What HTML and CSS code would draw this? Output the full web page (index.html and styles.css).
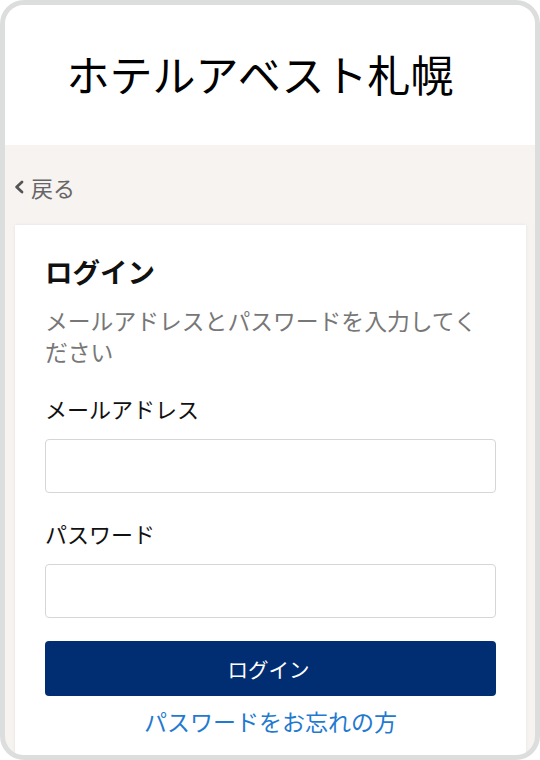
FILE: index.html
```html
<!DOCTYPE html>
<html lang="ja">
<head>
<meta charset="utf-8">
<title>ログイン</title>
<link rel="stylesheet" href="styles.css">
</head>
<body>
<div class="frame">
  <header class="header">
    <h1 class="title">ホテルアベスト札幌</h1>
  </header>
  <main class="main">
    <a class="back" href="#">
      <svg class="chev" width="12" height="14" viewBox="0 0 12 14"><path d="M9 2 L3.6 7 L9 12" fill="none" stroke="#555" stroke-width="2.8" stroke-linecap="round" stroke-linejoin="round"/></svg>
      <span>戻る</span>
    </a>
    <section class="card">
      <h2 class="card-title">ログイン</h2>
      <p class="lead">メールアドレスとパスワードを入力してください</p>
      <label class="label" for="email">メールアドレス</label>
      <input class="input" id="email" type="email">
      <label class="label label-pw" for="pw">パスワード</label>
      <input class="input" id="pw" type="password">
      <button class="btn" type="button">ログイン</button>
      <a class="forgot" href="#">パスワードをお忘れの方</a>
    </section>
  </main>
</div>
</body>
</html>
```

FILE: styles.css
```css
* { box-sizing: border-box; }
html, body { margin: 0; padding: 0; }
body {
  font-family: "Noto Sans CJK JP", "Noto Sans", sans-serif;
  background: #ffffff;
  color: #111;
}
.frame {
  width: 540px;
  height: 760px;
  border: 5px solid #dcdedd;
  border-radius: 24px;
  overflow: hidden;
  background: #f6f3f1;
  display: flex;
  flex-direction: column;
}
.header {
  height: 140px;
  background: #fff;
  display: flex;
  align-items: center;
  justify-content: center;
  padding-right: 20px;
  padding-bottom: 4px;
  flex-shrink: 0;
}
.title {
  margin: 0;
  font-size: 43px;
  font-weight: 400;
  color: #000;
  line-height: 1;
}
.main {
  flex: 1;
  display: flex;
  flex-direction: column;
}
.back {
  height: 80px;
  display: flex;
  align-items: center;
  padding-left: 8px;
  padding-top: 3px;
  color: #666;
  text-decoration: none;
  font-size: 22px;
  gap: 6px;
}
.chev { display: block; }
.card {
  flex: 1;
  margin: 0 9px 0 10px;
  background: #fff;
  padding: 27px 30px 0 30px;
  box-shadow: 0 0 3px rgba(0,0,0,0.08);
  display: flex;
  flex-direction: column;
}
.card-title {
  margin: 0;
  font-size: 27.5px;
  font-weight: 700;
  line-height: 38px;
  color: #111;
}
.lead {
  margin: 15px 0 0 0;
  font-size: 22.8px;
  line-height: 31px;
  color: #777;
}
.label {
  display: block;
  margin-top: 26px;
  font-size: 22px;
  line-height: 30px;
  color: #111;
}
.label-pw { margin-top: 25px; }
.input {
  display: block;
  width: 100%;
  height: 54px;
  margin-top: 16px;
  border: 1px solid #d6d6d6;
  border-radius: 4px;
  background: #fff;
  font-size: 20px;
}
.btn {
  margin-top: 23px;
  height: 55px;
  width: 100%;
  border: none;
  border-radius: 4px;
  background: #012e72;
  color: #fff;
  font-family: inherit;
  font-size: 20.5px;
  padding-right: 10px;
}
.forgot {
  margin-top: 10px;
  text-align: center;
  font-size: 23px;
  line-height: 30px;
  color: #1f7ad0;
  text-decoration: none;
}
```
